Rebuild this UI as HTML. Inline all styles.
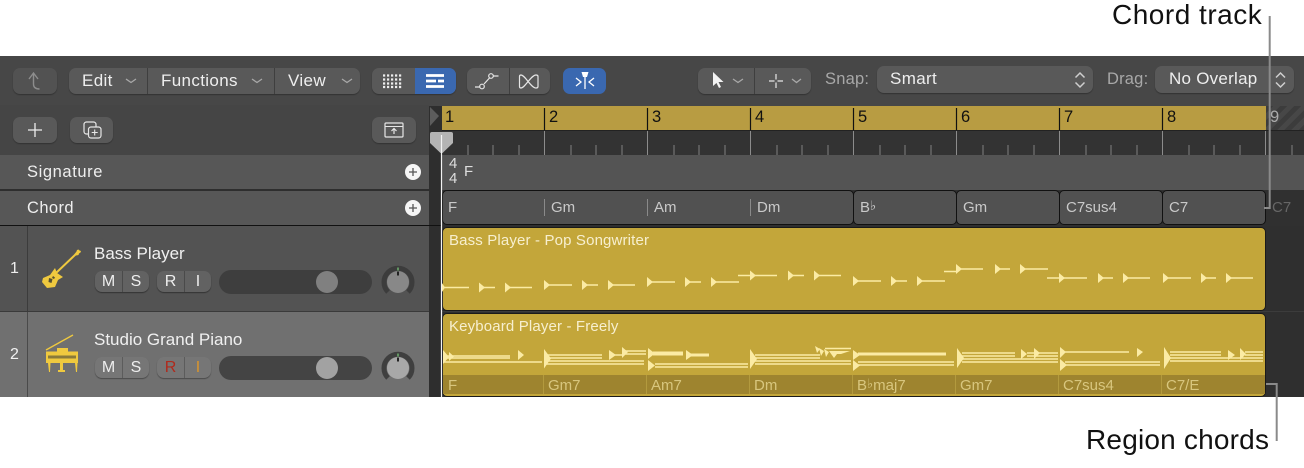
<!DOCTYPE html>
<html><head><meta charset="utf-8">
<style>
html,body{margin:0;padding:0;background:#fff}
body{width:1304px;height:468px;overflow:hidden;position:relative;font-family:"Liberation Sans",sans-serif}
div,span{position:absolute;box-sizing:border-box}
.t{white-space:nowrap;line-height:20px;height:20px}
.btn{background:#595959;border-radius:7px;box-shadow:0 1px 1px #333}
.sep{width:1px;background:#3f3f3f}
.tb{color:#eee;font-size:17px;letter-spacing:.35px}
.lab{color:#a8a8a8;font-size:16.5px;letter-spacing:.2px}
.bar{color:#111;font-size:16.5px}
.ch{color:#c9c9c9;font-size:15px}
.rc{color:#d8c67e;font-size:15px}
.rt{color:#f7efcf;font-size:15px;letter-spacing:.15px}
.nm{color:#f0f0f0;font-size:17px}
.ms{color:#eee;font-size:16px;text-align:center;top:0;height:21px;line-height:21px}
.cl{color:#111;font-size:28px;white-space:nowrap;line-height:32px;height:32px}
.fl{position:static;font-size:13px;line-height:0;vertical-align:2px}
svg{position:absolute;left:0;top:0}
</style></head><body>

<div style="left:0;top:56px;width:1304px;height:341px;background:#2e2e2e"></div>
<div style="left:0;top:56px;width:1304px;height:50px;background:#474747"></div>
<div style="left:0;top:105px;width:429px;height:50px;background:#454545"></div>

<!-- toolbar buttons -->
<div class="btn" style="left:13px;top:68px;width:44px;height:26px;background:#525252"></div>
<div class="btn" style="left:69px;top:68px;width:291px;height:26px"></div>
<div class="sep" style="left:147px;top:68px;height:26px"></div>
<div class="sep" style="left:274px;top:68px;height:26px"></div>
<div class="t tb" style="left:82px;top:71px">Edit</div>
<div class="t tb" style="left:161px;top:71px">Functions</div>
<div class="t tb" style="left:288px;top:71px">View</div>
<div class="btn" style="left:372px;top:68px;width:84px;height:26px"></div>
<div style="left:415px;top:68px;width:41px;height:26px;background:#3a68b0;border-radius:0 7px 7px 0"></div>
<div class="btn" style="left:467px;top:68px;width:83px;height:26px"></div>
<div class="sep" style="left:509px;top:68px;height:26px"></div>
<div style="left:563px;top:68px;width:43px;height:26px;background:#3a68b0;border-radius:7px"></div>
<div class="btn" style="left:698px;top:68px;width:113px;height:26px"></div>
<div class="sep" style="left:754px;top:68px;height:26px"></div>
<div class="t lab" style="left:825px;top:69px">Snap:</div>
<div class="btn" style="left:877px;top:66px;width:216px;height:27px"></div>
<div class="t tb" style="left:890px;top:69px">Smart</div>
<div class="t lab" style="left:1107px;top:69px">Drag:</div>
<div class="btn" style="left:1155px;top:66px;width:139px;height:27px"></div>
<div class="t tb" style="left:1169px;top:69px;letter-spacing:.25px">No Overlap</div>

<!-- second row buttons -->
<div class="btn" style="left:13px;top:117px;width:44px;height:26px"></div>
<div class="btn" style="left:70px;top:117px;width:43px;height:26px"></div>
<div class="btn" style="left:372px;top:117px;width:44px;height:26px"></div>

<!-- left rows -->
<div style="left:0;top:155px;width:429px;height:34px;background:#575757"></div>
<div style="left:0;top:191px;width:429px;height:34px;background:#575757"></div>
<div class="t" style="left:27px;top:162px;color:#eee;font-size:16.5px;letter-spacing:.6px">Signature</div>
<div class="t" style="left:27px;top:198px;color:#eee;font-size:16.5px;letter-spacing:.4px">Chord</div>
<div style="left:0;top:225px;width:441px;height:1px;background:#111"></div>

<div style="left:0;top:226px;width:429px;height:85px;background:#535353"></div>
<div style="left:0;top:312px;width:429px;height:85px;background:#707070"></div>
<div style="left:0;top:311px;width:429px;height:1px;background:#3a3a3a"></div>
<div style="left:27px;top:226px;width:1px;height:85px;background:#3c3c3c"></div>
<div style="left:27px;top:312px;width:1px;height:85px;background:#4a4a4a"></div>
<div class="t" style="left:10px;top:259px;color:#eee;font-size:16px">1</div>
<div class="t" style="left:10px;top:345px;color:#f2f2f2;font-size:16px">2</div>
<div class="t nm" style="left:94px;top:244px">Bass Player</div>
<div class="t nm" style="left:94px;top:330px">Studio Grand Piano</div>

<!-- track 1 controls -->
<div class="btn" style="left:95px;top:271px;width:54px;height:21px;background:#626262"><span class="ms" style="left:0;width:27px">M</span><span class="ms" style="left:28px;width:26px">S</span><span class="sep" style="left:27px;top:0;height:21px;background:#4a4a4a"></span></div>
<div class="btn" style="left:157px;top:271px;width:54px;height:21px;background:#626262"><span class="ms" style="left:0;width:27px">R</span><span class="ms" style="left:28px;width:26px">I</span><span class="sep" style="left:27px;top:0;height:21px;background:#4a4a4a"></span></div>
<div style="left:219px;top:270px;width:153px;height:24px;border-radius:12px;background:#3e3e3e"></div>
<div style="left:316px;top:271px;width:22px;height:22px;border-radius:50%;background:#808080"></div>
<!-- track 2 controls -->
<div class="btn" style="left:95px;top:357px;width:54px;height:21px;background:#767676;box-shadow:0 1px 1px #4a4a4a"><span class="ms" style="left:0;width:27px">M</span><span class="ms" style="left:28px;width:26px">S</span><span class="sep" style="left:27px;top:0;height:21px;background:#5c5c5c"></span></div>
<div class="btn" style="left:157px;top:357px;width:54px;height:21px;background:#767676;box-shadow:0 1px 1px #4a4a4a"><span class="ms" style="left:0;width:27px;color:#b02a1c">R</span><span class="ms" style="left:28px;width:26px;color:#d9952c">I</span><span class="sep" style="left:27px;top:0;height:21px;background:#5c5c5c"></span></div>
<div style="left:219px;top:356px;width:153px;height:24px;border-radius:12px;background:#444"></div>
<div style="left:316px;top:357px;width:22px;height:22px;border-radius:50%;background:#a2a2a2"></div>

<!-- timeline -->
<div style="left:442px;top:106px;width:824px;height:24px;background:#b89c42"></div>
<div style="left:1266px;top:106px;width:38px;height:24px;background:repeating-linear-gradient(135deg,#3c3c3c 0 5px,#474747 5px 10px)"></div>
<div style="left:442px;top:130px;width:862px;height:1px;background:#222"></div>
<div style="left:442px;top:131px;width:862px;height:24px;background:#333"></div>
<div style="left:442px;top:155px;width:862px;height:35px;background:#545454"></div>
<div style="left:442px;top:190px;width:862px;height:36px;background:#303030"></div>
<div style="left:442px;top:226px;width:862px;height:171px;background:#2f2f2f"></div>
<div style="left:442px;top:311px;width:862px;height:1px;background:#3c3c3c"></div>

<div class="t bar" style="left:445px;top:107px">1</div>
<div class="t bar" style="left:549px;top:107px">2</div>
<div class="t bar" style="left:652px;top:107px">3</div>
<div class="t bar" style="left:755px;top:107px">4</div>
<div class="t bar" style="left:858px;top:107px">5</div>
<div class="t bar" style="left:961px;top:107px">6</div>
<div class="t bar" style="left:1064px;top:107px">7</div>
<div class="t bar" style="left:1167px;top:107px">8</div>
<div class="t bar" style="left:1270px;top:107px;color:#aaa">9</div>

<div class="t" style="left:449px;top:156px;color:#ddd;font-size:15px;line-height:15px;height:15px">4</div>
<div class="t" style="left:449px;top:171px;color:#ddd;font-size:15px;line-height:15px;height:15px">4</div>
<div class="t" style="left:464px;top:162px;color:#ddd;font-size:15px">F</div>

<!-- chord track -->
<div style="left:442px;top:190px;width:412px;height:35px;background:#515151;border:1px solid #111;border-radius:5px"></div>
<div style="left:853px;top:190px;width:104px;height:35px;background:#515151;border:1px solid #111;border-radius:5px"></div>
<div style="left:956px;top:190px;width:104px;height:35px;background:#515151;border:1px solid #111;border-radius:5px"></div>
<div style="left:1059px;top:190px;width:104px;height:35px;background:#515151;border:1px solid #111;border-radius:5px"></div>
<div style="left:1162px;top:190px;width:104px;height:35px;background:#515151;border:1px solid #111;border-radius:5px"></div>
<div style="left:544px;top:199px;width:1px;height:17px;background:#8a8a8a"></div>
<div style="left:647px;top:199px;width:1px;height:17px;background:#8a8a8a"></div>
<div style="left:750px;top:199px;width:1px;height:17px;background:#8a8a8a"></div>
<div class="t ch" style="left:448px;top:198px">F</div>
<div class="t ch" style="left:551px;top:198px">Gm</div>
<div class="t ch" style="left:654px;top:198px">Am</div>
<div class="t ch" style="left:757px;top:198px">Dm</div>
<div class="t ch" style="left:860px;top:198px">B<span class="fl">♭</span></div>
<div class="t ch" style="left:963px;top:198px">Gm</div>
<div class="t ch" style="left:1066px;top:198px">C7sus4</div>
<div class="t ch" style="left:1169px;top:198px">C7</div>
<div class="t ch" style="left:1272px;top:198px;color:#666">C7</div>

<!-- regions -->
<div style="left:442px;top:227px;width:824px;height:84px;background:#c3a63a;border:1px solid #1a1a1a;border-radius:5px"></div>
<div style="left:442px;top:313px;width:824px;height:84px;background:#c3a63a;border:1px solid #1a1a1a;border-radius:5px"></div>
<div style="left:443px;top:375px;width:822px;height:19px;background:#9e842f"></div>
<div class="t rt" style="left:449px;top:231px">Bass Player - Pop Songwriter</div>
<div class="t rt" style="left:449px;top:317px">Keyboard Player - Freely</div>
<div class="t rc" style="left:448px;top:376px">F</div>
<div class="t rc" style="left:548px;top:376px">Gm7</div>
<div class="t rc" style="left:651px;top:376px">Am7</div>
<div class="t rc" style="left:754px;top:376px">Dm</div>
<div class="t rc" style="left:857px;top:376px">B<span class="fl">♭</span>maj7</div>
<div class="t rc" style="left:960px;top:376px">Gm7</div>
<div class="t rc" style="left:1063px;top:376px">C7sus4</div>
<div class="t rc" style="left:1166px;top:376px">C7/E</div>

<svg width="1304" height="468" viewBox="0 0 1304 468" fill="none">
 <!-- strip arrow & playhead -->
 <path d="M430 107l9 9-9 10z" fill="#5c5c5c"/>
 <path d="M432 132h19q2 0 2 2v9l-10.500 10h-2L430 143v-9q0-2 2-2z" fill="#b4b4b4"/>
 <path d="M441.500 135V397" stroke="#f2f2f2" stroke-width="1.200"/>
 <!-- ruler separators -->
 <path d="M544.500 108V130M647.500 108V130M750.500 108V130M853.500 108V130M956.500 108V130M1059.500 108V130M1162.500 108V130" stroke="#111" stroke-width="1.200"/>
 <path d="M544.500 131V155M647.500 131V155M750.500 131V155M853.500 131V155M956.500 131V155M1059.500 131V155M1162.500 131V155M1265.500 131V155" stroke="#8c8c8c"/>
 <path d="M468 145v10M493 145v10M519 145v10M571 145v10M596 145v10M622 145v10M674 145v10M699 145v10M725 145v10M777 145v10M802 145v10M828 145v10M880 145v10M905 145v10M931 145v10M983 145v10M1008 145v10M1034 145v10M1086 145v10M1111 145v10M1137 145v10M1189 145v10M1214 145v10M1240 145v10M1292 145v10" stroke="#808080"/>
 <!-- region chord separators -->
 <path d="M543.500 375v19M646.500 375v19M749.500 375v19M852.500 375v19M955.500 375v19M1058.500 375v19M1161.500 375v19" stroke="#b39a3e"/>
 <!-- bass notes lines -->
 <path d="M442 287.500h27M479 287.500h16M505 287.500h27M544 285h28M582 285h16M608 285h27M647 282h28M685 282h16M711 282h28M738 275.500h12M750 275.500h27M788 275.500h16M814 275.500h27M853 281h28M891 281h16M917 281h28M944 271.500h12M956 269h27M995 269h15M1020 269h28M1047 278h12M1059 278h28M1098 278h15M1123 278h27M1163 278h28M1201 278h15M1226 278h27" stroke="#fbeba4" stroke-width="1.400"/>
 <path d="M442 283l3 4.500-3 4.500zM479 282.500l6 5-6 5zM505 282.500l6 5-6 5zM544 280l6 5-6 5zM582 280l6 5-6 5zM608 280l6 5-6 5zM647 277l6 5-6 5zM685 277l6 5-6 5zM711 277l6 5-6 5zM750 270.500l6 5-6 5zM788 270.500l6 5-6 5zM814 270.500l6 5-6 5zM853 276l6 5-6 5zM891 276l6 5-6 5zM917 276l6 5-6 5zM956 264l6 5-6 5zM995 264l6 5-6 5zM1020 264l6 5-6 5zM1059 273l6 5-6 5zM1098 273l6 5-6 5zM1123 273l6 5-6 5zM1163 273l6 5-6 5zM1201 273l6 5-6 5zM1226 273l6 5-6 5z" fill="#fbeba4"/>
 <!-- keyboard notes lines -->
 <path d="M443 356h67M443 358h67M443 362h99M545 355h57M545 358h57M545 361h99M545 364h99M610 355h12M622 351h24M622 354h24M655 364h93M655 367h93M755 355h65M755 358h65M755 361h96M755 364h96M825 348.500h26M858 362h96M858 365h96M962 353h53M962 356h53M962 359h96M962 362h96M1027 353h31M1027 356h31M1065 352h64M1065 362h95M1065 365h95M1170 352h51M1170 355h51M1170 358h93M1170 361h93M1245 352h18M1245 355h18" stroke="#fbeba4" stroke-width="1.500"/>
 <path d="M653 351.500h30v4h-30zM686 353.500h23v3h-23zM858 352.500h88v3h-88z" fill="#fbeba4"/>
 <path d="M443 350l6 7-6 7zM449 352l5 4.500-5 4.500zM518 350l6 5-6 5zM544 349l7 9.500-7 10zM609 350l7 5-7 5zM622 347l6 5-6 6zM648 348l7 5.500-7 5.500zM686 350l7 5-7 5zM648 360l7 5.500-7 5.500zM750 349l7 10-7 10zM815 346l5 3-3 4zM819 348l5 3-3 5zM824 349l5 3-3 5zM829 351l5 7 3-4 4 0 9-3zM853 350l7 5-7 5zM853 360l7 5.500-7 5.500zM957 348l7 10-7 10zM1021 349l6 5-6 5zM1034 348l6 5-6 6zM1060 347l6 5-6 6zM1137 348l6 4-6 5zM1060 359l7 6-7 6zM1164 347l7 11-7 11zM1228 350l7 5-7 5zM1240 348l6 6-6 6z" fill="#fbeba4"/>

 <!-- back arrow -->
 <path d="M29 79l4.500-6 4.500 6M33.500 73v11q0 5 6 5" stroke="#8d8d8d" stroke-width="1.400"/>
 <!-- chevrons -->
 <path d="M126 79l5 3.500 5-3.500M252 79l5 3.500 5-3.500M342 79l5 3.500 5-3.500M733 79l5 3.500 5-3.500M792 79l4.500 3.500 4.500-3.500" stroke="#a8a8a8" stroke-width="1.300"/>
 <!-- grid icon -->
 <path d="M383 75.500h19M383 79.500h19M383 83.500h19M383 87h19" stroke="#ededed" stroke-width="2.300" stroke-dasharray="2.200 1.800"/>
 <!-- list icon (blue) -->
 <path d="M426 75.500h18M426 81h10M438 81h6M426 86.500h18" stroke="#fff" stroke-width="2.700"/>
 <!-- automation -->
 <path d="M475 87h5M484 84l5.500-6M493.500 76h5" stroke="#e6e6e6" stroke-width="1.200"/><circle cx="482" cy="86.500" r="2.300" stroke="#e6e6e6" stroke-width="1.200"/><circle cx="491" cy="76" r="2.300" stroke="#e6e6e6" stroke-width="1.200"/>
 <!-- flex -->
 <path d="M521 75c-1 0-1.500 .5-1.500 1.500v10c0 1 .5 1.500 1.500 1.500 4 0 10-13 15-13 1.500 0 2 .5 2 1.500v10c0 1-.5 1.500-2 1.500-5 0-11-13-15-13z" stroke="#e6e6e6" stroke-width="1.200"/>
 <!-- snap/catch -->
 <path d="M581.500 72h7l-1.500 5h-4z" fill="#fff"/><path d="M585 76v13M576 78l5 4-5 4M594 78l-5 4 5 4" stroke="#fff" stroke-width="1.300"/>
 <!-- pointer -->
 <path d="M713 72l0 14 3.500-3 2.500 5 2-1-2.500-5h5z" fill="#f2f2f2"/>
 <!-- crosshair -->
 <path d="M776 74v5.500M776 82.500v5.500M769 81h5.500M777.500 81h5.500" stroke="#e6e6e6" stroke-width="1.200"/>
 <!-- select arrows -->
 <path d="M1075.500 77.500l4.500-4.500 4.500 4.500M1075.500 82.500l4.500 4.500 4.500-4.500M1276 77.500l4.500-4.500 4.500 4.500M1276 82.500l4.500 4.500 4.500-4.500" stroke="#cfcfcf" stroke-width="1.500"/>
 <!-- plus -->
 <path d="M35 123v14M28 130h14" stroke="#ededed" stroke-width="1.300"/>
 <!-- duplicate -->
 <rect x="84" y="122" width="12" height="12" rx="2.500" stroke="#e6e6e6" stroke-width="1.200"/>
 <rect x="88.500" y="127" width="12.500" height="11" rx="2.500" fill="#595959" stroke="#e6e6e6" stroke-width="1.200"/>
 <path d="M94.700 129.500v6M91.700 132.500h6" stroke="#e6e6e6" stroke-width="1.100"/>
 <!-- upload -->
 <rect x="385" y="123" width="18" height="14" rx="1" stroke="#e6e6e6" stroke-width="1.200"/><path d="M385 126.500h18" stroke="#e6e6e6"/><path d="M394 134v-5M391.500 131l2.500-2.500 2.500 2.500" stroke="#e6e6e6" stroke-width="1.200"/>
 <!-- add circles -->
 <circle cx="413" cy="172" r="8" fill="#f5f5f5"/><path d="M413 168v8M409 172h8" stroke="#555" stroke-width="1.300"/>
 <circle cx="413" cy="208" r="8" fill="#f5f5f5"/><path d="M413 204v8M409 208h8" stroke="#555" stroke-width="1.300"/>

 <!-- bass guitar icon -->
 <path d="M56 273L76 254" stroke="#efc93f" stroke-width="2"/>
 <path d="M74.500 254l2-2.500 .5-1.500 1.500-.5 1 1 1.500.5-.5 1.500-1.500 1-.5 1.500-2 .5z" fill="#efc93f"/>
 <path d="M55 268l2 5 6 4-5 3-3 7-8 1-5-6 1-4 7-3z" fill="#efc93f"/>
 <path d="M49 278l3.500 1-1 4-3-1zM53 276l2 1.500-1 1.500-2-1z" fill="#57502f"/>
 <!-- piano icon -->
 <path d="M46 350l27-15" stroke="#efc93f" stroke-width="1.300"/>
 <path d="M46 351.500h32v11.500H46z" fill="#efc93f"/>
 <path d="M57 348h11v3.500H57z" fill="#efc93f"/>
 <path d="M48 355.500h28v3H48z" fill="#8a7a3a"/>
 <path d="M48 363h2.500l-.5 9h-1zM75 363h2.500l-.5 9h-1zM60 363h3v7h2v2h-7v-2h2z" fill="#efc93f"/>

 <!-- knobs -->
 <path d="M388 292A14 14 0 1 1 408 292" stroke="#3c3c3c" stroke-width="5"/>
 <circle cx="398" cy="282" r="11" fill="#888"/><path d="M398 267.500v3" stroke="#6fb36f" stroke-width="1.500"/><path d="M398 271.500v4" stroke="#222" stroke-width="2"/>
 <path d="M388 378A14 14 0 1 1 408 378" stroke="#3f3f3f" stroke-width="5"/>
 <circle cx="398" cy="368" r="11" fill="#a8a8a8"/><path d="M398 353.500v3" stroke="#6fb36f" stroke-width="1.500"/><path d="M398 357.500v4" stroke="#222" stroke-width="2"/>

 <!-- callouts -->
 <path d="M1269.700 16V208H1264" stroke="#8a8a8a" stroke-width="2"/>
 <path d="M1266 384H1276.700V441" stroke="#8a8a8a" stroke-width="2"/>
</svg>

<div class="cl" style="left:1112px;top:-1px;letter-spacing:.5px">Chord track</div>
<div class="cl" style="left:1086px;top:424px;letter-spacing:.2px">Region chords</div>
</body></html>
